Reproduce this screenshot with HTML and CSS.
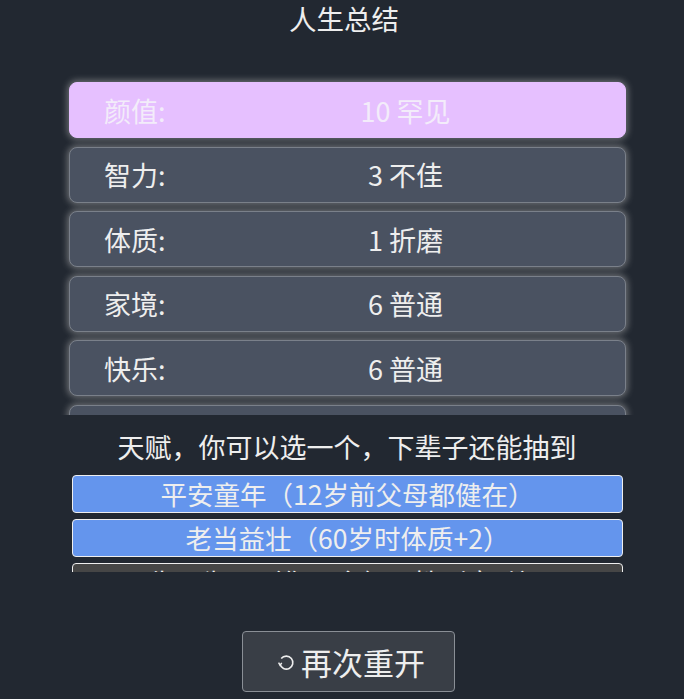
FILE: index.html
```html
<!DOCTYPE html>
<html lang="zh-CN">
<head>
    <meta charset="UTF-8">
    <meta name="viewport" content="width=device-width, initial-scale=1.0">
    <title>人生总结</title>
    <link rel="stylesheet" href="styles.css">
</head>
<body>
    <div class="page">
        <h1 class="title">人生总结</h1>

        <div class="summary">
            <ul class="props">
                <li class="prop rare"><span class="prop-name">颜值:</span><span class="prop-value">10 罕见</span></li>
                <li class="prop"><span class="prop-name">智力:</span><span class="prop-value">3 不佳</span></li>
                <li class="prop"><span class="prop-name">体质:</span><span class="prop-value">1 折磨</span></li>
                <li class="prop"><span class="prop-name">家境:</span><span class="prop-value">6 普通</span></li>
                <li class="prop"><span class="prop-name">快乐:</span><span class="prop-value">6 普通</span></li>
                <li class="prop"><span class="prop-name">享年:</span><span class="prop-value">61 中年</span></li>
            </ul>
        </div>

        <div class="talent-title">天赋，你可以选一个，下辈子还能抽到</div>
        <div class="talents">
            <ul class="talent-list">
                <li class="talent blue">平安童年（12岁前父母都健在）</li>
                <li class="talent blue">老当益壮（60岁时体质+2）</li>
                <li class="talent">生而为男（你不会经历性别变动）</li>
            </ul>
        </div>

        <div class="actions">
            <button class="restart">
                <svg class="restart-icon" width="18" height="18" viewBox="0 0 18 18">
                    <path d="M4.2 4.6 A6.5 6.5 0 1 1 3 10" fill="none" stroke="#eeeeee" stroke-width="1.6"/>
                    <path d="M1.6 8.6 L3 11.2 L4.8 8.8" fill="none" stroke="#eeeeee" stroke-width="1.4"/>
                </svg>再次重开
            </button>
        </div>
    </div>
</body>
</html>
```

FILE: styles.css
```css
body {
    margin: 0;
    background-color: #222831;
    color: #eeeeee;
    font-family: "Noto Sans CJK SC", "Noto Sans", sans-serif;
}
.page {
    width: 684px;
    height: 699px;
    overflow: hidden;
}
.title {
    margin: 0;
    padding-top: 2px;
    padding-left: 4px;
    font-size: 27.5px;
    font-weight: normal;
    line-height: 32px;
    text-align: center;
}
.summary {
    margin: 36px 44px 0 56px;
    height: 345px;
    overflow: hidden;
}
.props {
    list-style: none;
    margin: 0;
    padding: 12px 14px 0 13px;
}
.prop {
    display: flex;
    align-items: center;
    height: 54px;
    margin-bottom: 8.6px;
    background: #4a5261;
    border: 1px solid #7a808a;
    border-radius: 8px;
    box-shadow: 0 0 6px 2px rgba(190, 190, 190, 0.45);
    font-size: 27px;
}
.prop.rare {
    background: #e6c0ff;
    border-color: #e6c0ff;
    color: #f3ecfa;
}
.prop-name {
    width: 116px;
    padding-left: 34px;
    box-sizing: border-box;
}
.prop-value {
    flex: 1;
    text-align: center;
}
.talent-title {
    margin-top: 13px;
    padding-left: 10px;
    font-size: 27px;
    line-height: 38px;
    text-align: center;
}
.talents {
    margin: 9px 61px 0 72px;
    height: 97px;
    overflow: hidden;
}
.talent-list {
    list-style: none;
    margin: 0;
    padding: 0;
}
.talent {
    height: 36px;
    margin-bottom: 6px;
    background: #464646;
    border: 1px solid #eeeeee;
    border-radius: 4px;
    font-size: 26.5px;
    line-height: 35px;
    text-align: center;
}
.talent.blue {
    background: #6495ed;
}
.actions {
    display: flex;
    justify-content: center;
    padding-top: 59px;
    padding-left: 12px;
}
.restart {
    display: flex;
    align-items: center;
    justify-content: center;
    width: 213px;
    height: 61px;
    padding: 0 0 0 6px;
    background: #393e46;
    color: #eeeeee;
    border: 1px solid #8a8f96;
    border-radius: 4px;
    font-family: "Noto Sans CJK SC", "Noto Sans", sans-serif;
    font-size: 31px;
}
.restart-icon {
    margin-right: 6px;
    margin-top: 2px;
}
```
